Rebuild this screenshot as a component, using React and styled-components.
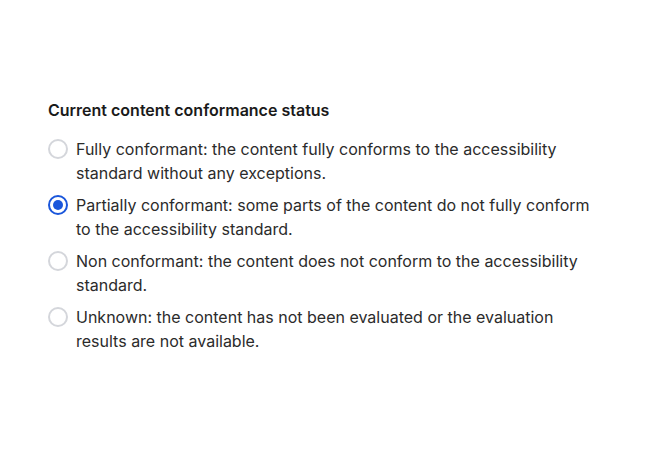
import React, { useState } from "react";
import styled, { createGlobalStyle } from "styled-components";

const Global = createGlobalStyle`
  html, body { margin: 0; padding: 0; background: #fff; }
  body { font-family: Inter, "Noto Sans", sans-serif; -webkit-font-smoothing: antialiased; }
`;

const Page = styled.div`
  padding: 99px 48px 0;
  box-sizing: border-box;
  width: 650px;
  height: 460px;
`;

const Fieldset = styled.fieldset`
  border: 0;
  margin: 0;
  padding: 0;
`;

const Legend = styled.legend`
  padding: 0;
  margin: 0 0 16px;
  font-size: 16px;
  line-height: 22px;
  font-weight: 600;
  color: #1a1a1a;
`;

const Options = styled.div`
  display: flex;
  flex-direction: column;
  gap: 8px;
`;

const Option = styled.label`
  display: flex;
  align-items: flex-start;
  gap: 8px;
  cursor: pointer;
`;

const Radio = styled.input.attrs({ type: "radio" })`
  appearance: none;
  margin: 2px 0 0;
  width: 20px;
  height: 20px;
  flex: 0 0 20px;
  border-radius: 50%;
  box-sizing: border-box;
  border: 2px solid #d4d6db;
  background: #fff;
  display: grid;
  place-items: center;
  &:checked {
    border-color: #1a56db;
  }
  &:checked::after {
    content: "";
    width: 10px;
    height: 10px;
    border-radius: 50%;
    background: #1a56db;
  }
`;

const Text = styled.span`
  font-size: 16px;
  line-height: 24px;
  color: #2b2b2b;
`;

const options = [
  "Fully conformant: the content fully conforms to the accessibility standard without any exceptions.",
  "Partially conformant: some parts of the content do not fully conform to the accessibility standard.",
  "Non conformant: the content does not conform to the accessibility standard.",
  "Unknown: the content has not been evaluated or the evaluation results are not available.",
];

export default function App() {
  const [sel, setSel] = useState(1);
  return (
    <Page>
      <Global />
      <Fieldset>
        <Legend>Current content conformance status</Legend>
        <Options>
          {options.map((t, i) => (
            <Option key={i}>
              <Radio name="status" checked={sel === i} onChange={() => setSel(i)} />
              <Text>{t}</Text>
            </Option>
          ))}
        </Options>
      </Fieldset>
    </Page>
  );
}
